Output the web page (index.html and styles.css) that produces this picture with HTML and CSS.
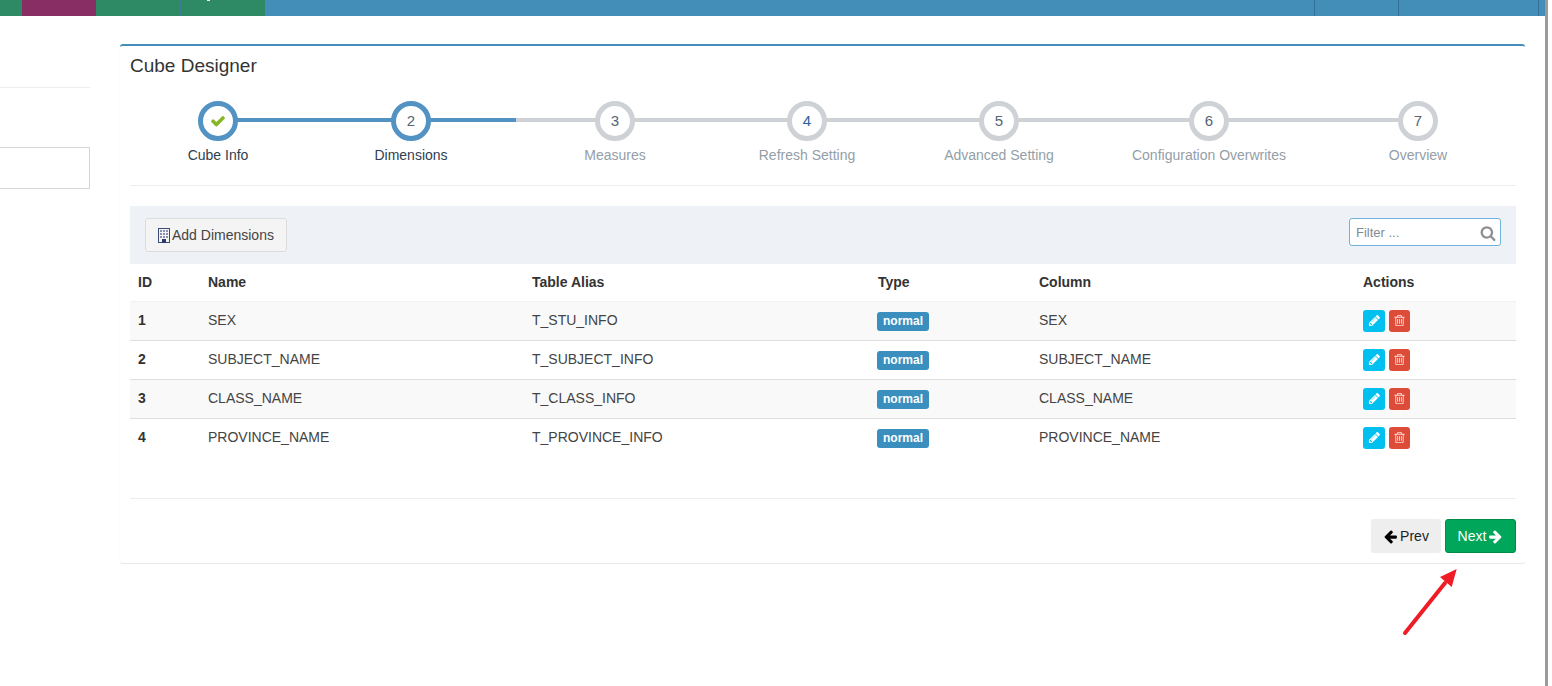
FILE: index.html
```html
<!DOCTYPE html>
<html lang="en">
<head>
<meta charset="utf-8">
<title>Cube Designer</title>
<link rel="stylesheet" href="styles.css">
</head>
<body>
<svg class="defs" width="0" height="0" aria-hidden="true">
  <symbol id="i-right" viewBox="0 0 1792 1792"><path d="M1600 960q0 54-37 91l-651 651q-39 37-91 37-51 0-90-37l-75-75q-38-38-38-91t38-91l293-293H245q-52 0-84.5-37.5T128 1024V896q0-53 32.5-90.5T245 768h704L656 474q-38-36-38-90t38-90l75-75q38-38 90-38 53 0 91 38l651 651q37 35 37 90z"/></symbol>
  <symbol id="i-pencil" viewBox="0 0 1792 1792"><path d="M491 1536l91-91-235-235-91 91v107h128v128h107zm523-928q0-22-22-22-10 0-17 7l-542 542q-7 7-7 17 0 22 22 22 10 0 17-7l542-542q7-7 7-17zm-54-192l416 416-832 832H128v-416zm683 96q0 53-37 90l-166 166-416-416 166-165q36-38 90-38 53 0 91 38l235 234q37 39 37 91z"/></symbol>
  <symbol id="i-trash" viewBox="0 0 1792 1792"><path d="M704 736v576q0 14-9 23t-23 9h-64q-14 0-23-9t-9-23V736q0-14 9-23t23-9h64q14 0 23 9t9 23zm256 0v576q0 14-9 23t-23 9h-64q-14 0-23-9t-9-23V736q0-14 9-23t23-9h64q14 0 23 9t9 23zm256 0v576q0 14-9 23t-23 9h-64q-14 0-23-9t-9-23V736q0-14 9-23t23-9h64q14 0 23 9t9 23zm128 724V512H448v948q0 22 7 40.5t14.5 27 10.5 8.5h832q3 0 10.5-8.5t14.5-27 7-40.5zM672 384h448l-48-117q-7-9-17-11H738q-10 2-17 11zm928 32v64q0 14-9 23t-23 9h-96v948q0 83-47 143.5t-113 60.5H480q-66 0-113-58.5T320 1464V512h-96q-14 0-23-9t-9-23v-64q0-14 9-23t23-9h309l70-167q15-37 54-63t79-26h320q40 0 79 26t54 63l70 167h309q14 0 23 9t9 23z"/></symbol>
</svg>

<div class="window">
  <header class="topbar">
    <span class="tab tab-green-a"></span>
    <span class="tab tab-purple"></span>
    <span class="tab tab-green-b"></span>
    <span class="tab tab-green-c"><span class="tab-mark"></span></span>
    <span class="topbar-fill"></span>
    <span class="tab tab-blue"></span>
    <span class="tab tab-blue tab-blue-last"></span>
  </header>

  <div class="workspace">
    <aside class="sidebar">
      <div class="side-rule"></div>
      <div class="side-input"></div>
    </aside>

    <main class="panel">
      <h2 class="panel-title">Cube Designer</h2>

      <ol class="steps">
        <li class="step step-first done"><span class="dot"><svg class="check" viewBox="0 0 1792 1792"><path d="M1671 566q0 40-28 68l-724 724-136 136q-28 28-68 28t-68-28l-136-136-362-362q-28-28-28-68t28-68l136-136q28-28 68-28t68 28l294 295 656-657q28-28 68-28t68 28l136 136q28 28 28 68z"/></svg></span><span class="step-label">Cube Info</span></li>
        <li class="step active"><span class="dot">2</span><span class="step-label">Dimensions</span></li>
        <li class="step"><span class="dot">3</span><span class="step-label">Measures</span></li>
        <li class="step step-link"><span class="dot">4</span><span class="step-label">Refresh Setting</span></li>
        <li class="step"><span class="dot">5</span><span class="step-label">Advanced Setting</span></li>
        <li class="step"><span class="dot">6</span><span class="step-label">Configuration Overwrites</span></li>
        <li class="step step-last"><span class="dot">7</span><span class="step-label">Overview</span></li>
      </ol>

      <div class="rule rule-steps"></div>

      <div class="toolbar">
        <button class="btn-add" type="button">
          <svg class="building" viewBox="0 0 12 15"><rect x="0.5" y="0.5" width="11" height="14" fill="#f4f4f4" stroke="#3d4a78"/><g fill="#8a92b0"><rect x="2" y="2" width="2" height="2"/><rect x="5" y="2" width="2" height="2"/><rect x="8" y="2" width="2" height="2"/><rect x="2" y="5" width="2" height="2"/><rect x="5" y="5" width="2" height="2"/><rect x="8" y="5" width="2" height="2"/><rect x="2" y="8" width="2" height="2"/><rect x="5" y="8" width="2" height="2"/><rect x="8" y="8" width="2" height="2"/></g><rect x="4" y="11" width="4" height="4" fill="#2b3a67"/></svg>Add Dimensions
        </button>
        <label class="filter">
          <input class="filter-input" type="text" placeholder="Filter ...">
          <svg class="search" viewBox="0 0 1792 1792"><path d="M1216 832q0-185-131.5-316.5T768 384 451.5 515.5 320 832t131.5 316.5T768 1280t316.5-131.5T1216 832zm512 832q0 52-38 90t-90 38q-54 0-90-38l-343-342q-179 124-399 124-143 0-273.5-55.5t-225-150-150-225T64 832t55.5-273.5 150-225 225-150T768 128t273.5 55.5 225 150 150 225T1472 832q0 220-124 399l343 343q37 37 37 90z"/></svg>
        </label>
      </div>

      <table class="dims">
        <colgroup>
          <col class="c-id"><col class="c-name"><col class="c-alias"><col class="c-type"><col class="c-column"><col class="c-actions">
        </colgroup>
        <thead>
          <tr><th>ID</th><th>Name</th><th>Table Alias</th><th>Type</th><th>Column</th><th>Actions</th></tr>
        </thead>
        <tbody>
          <tr><td class="id">1</td><td>SEX</td><td>T_STU_INFO</td><td><span class="badge">normal</span></td><td>SEX</td><td><span class="actions"><button class="act act-edit" type="button"><svg class="act-icon"><use href="#i-pencil"/></svg></button><button class="act act-del" type="button"><svg class="act-icon"><use href="#i-trash"/></svg></button></span></td></tr>
          <tr><td class="id">2</td><td>SUBJECT_NAME</td><td>T_SUBJECT_INFO</td><td><span class="badge">normal</span></td><td>SUBJECT_NAME</td><td><span class="actions"><button class="act act-edit" type="button"><svg class="act-icon"><use href="#i-pencil"/></svg></button><button class="act act-del" type="button"><svg class="act-icon"><use href="#i-trash"/></svg></button></span></td></tr>
          <tr><td class="id">3</td><td>CLASS_NAME</td><td>T_CLASS_INFO</td><td><span class="badge">normal</span></td><td>CLASS_NAME</td><td><span class="actions"><button class="act act-edit" type="button"><svg class="act-icon"><use href="#i-pencil"/></svg></button><button class="act act-del" type="button"><svg class="act-icon"><use href="#i-trash"/></svg></button></span></td></tr>
          <tr><td class="id">4</td><td>PROVINCE_NAME</td><td>T_PROVINCE_INFO</td><td><span class="badge">normal</span></td><td>PROVINCE_NAME</td><td><span class="actions"><button class="act act-edit" type="button"><svg class="act-icon"><use href="#i-pencil"/></svg></button><button class="act act-del" type="button"><svg class="act-icon"><use href="#i-trash"/></svg></button></span></td></tr>
        </tbody>
      </table>

      <div class="rule rule-foot"></div>

      <footer class="pager">
        <button class="btn btn-prev" type="button"><svg class="arrow arrow-left"><use href="#i-right"/></svg>Prev</button>
        <button class="btn btn-next" type="button">Next<svg class="arrow"><use href="#i-right"/></svg></button>
      </footer>
    </main>
  </div>

  <svg class="annotation" viewBox="0 0 70 80" aria-hidden="true">
    <line x1="7" y1="74" x2="47" y2="24" stroke="#ee1c25" stroke-width="4" stroke-linecap="round"/>
    <polygon points="58.7,10 42,18 53.7,28" fill="#ee1c25"/>
  </svg>
</div>
</body>
</html>
```
FILE: styles.css
```css
* { box-sizing: border-box; }

html, body {
  margin: 0;
  height: 100%;
  overflow: hidden;
  background: #fff;
}

body {
  font-family: "Liberation Sans", Arial, sans-serif;
  font-size: 14px;
  color: #333;
}

.defs { position: absolute; }

.window {
  position: relative;
  width: 1548px;
  height: 686px;
  border-right: 3px solid #9a9a9a;
}

/* top bar */
.topbar {
  display: flex;
  height: 16px;
  background: #438eb9;
}
.tab { display: block; height: 100%; position: relative; }
.tab-green-a { width: 22px; background: #2e8965; }
.tab-purple { width: 74px; background: #892e65; }
.tab-green-b { width: 85px; background: #2e8965; border-right: 1px solid #3f7f93; }
.tab-green-c { width: 84px; background: #2e8965; }
.tab-mark {
  position: absolute;
  left: 26px;
  top: 0;
  width: 3px;
  height: 1px;
  background: #f4efe0;
}
.topbar-fill { flex: 1; }
.tab-blue { width: 84px; border-left: 1px solid #2f6f98; }
.tab-blue-last { width: 141px; border-right: 1px solid #2f6f98; margin-right: 6px; }

/* layout */
.workspace {
  display: flex;
  gap: 30px;
  padding-top: 28px;
}

.sidebar {
  width: 90px;
  padding-top: 43px;
}
.side-rule { height: 1px; background: #eee; }
.side-input {
  height: 42px;
  margin-top: 59px;
  border: 1px solid #d5d5d5;
  border-left: 0;
}

.panel {
  width: 1405px;
  height: 519px;
  padding: 0 9px 0 10px;
  background: #fff;
  border-top: 2px solid #438eb9;
  border-radius: 3px;
  box-shadow: 0 1px 1px rgba(0, 0, 0, .1);
}

.panel-title {
  margin: 0;
  padding-top: 10px;
  font-size: 19px;
  font-weight: 400;
  line-height: 20px;
  color: #333;
}

/* steps */
.steps {
  display: grid;
  grid-template-columns: 176px 210px 198px 186px 198px 222px 196px;
  margin: 25px 0 0;
  padding: 0;
  list-style: none;
}
.step {
  position: relative;
  display: flex;
  flex-direction: column;
  align-items: center;
}
.step::before {
  content: "";
  position: absolute;
  top: 17px;
  left: 0;
  right: 0;
  height: 4px;
  background: #ced1d6;
}
.step-first::before { left: 50%; }
.step-last::before { right: 50%; }
.step.done::before, .step.active::before { background: #5293c4; }

.dot {
  position: relative;
  display: flex;
  align-items: center;
  justify-content: center;
  width: 40px;
  height: 40px;
  padding-bottom: 2px;
  border: 5px solid #ced1d6;
  border-radius: 50%;
  background: #fff;
  font-size: 15px;
  color: #546474;
}
.done .dot { padding-bottom: 0; }
.done .dot, .active .dot { border-color: #5293c4; }
.step-link .dot { color: #2b5f9e; }
.check { width: 16px; height: 16px; fill: #87b727; }

.step-label {
  margin-top: 6px;
  line-height: 16px;
  color: #949ea7;
}
.done .step-label, .active .step-label { color: #2f4050; }

.rule { height: 1px; background: #eeeeee; }
.rule-steps { margin-top: 22px; }

/* toolbar */
.toolbar {
  display: flex;
  justify-content: space-between;
  align-items: flex-start;
  height: 58px;
  margin-top: 20px;
  padding: 12px 15px;
  background: #eef1f6;
}
.btn-add {
  display: flex;
  align-items: center;
  height: 34px;
  width: 142px;
  padding: 0 0 0 12px;
  border: 1px solid #dcdcdc;
  border-radius: 3px;
  background: #f4f4f4;
  font: 14px "Liberation Sans", Arial, sans-serif;
  color: #444;
}
.building { width: 12px; height: 15px; margin-right: 2px; }

.filter {
  position: relative;
  display: block;
  width: 152px;
  height: 28px;
}
.filter-input {
  display: block;
  width: 100%;
  height: 100%;
  padding: 0 26px 0 6px;
  border: 1px solid #6fb3e0;
  border-radius: 3px;
  background: #fff;
  font: 13px "Liberation Sans", Arial, sans-serif;
  color: #555;
}
.filter-input::placeholder { color: #808a94; opacity: 1; }
.search {
  position: absolute;
  right: 5px;
  top: 7px;
  width: 16px;
  height: 16px;
  fill: #8d9092;
}

/* table */
.dims {
  width: 100%;
  table-layout: fixed;
  border-collapse: collapse;
}
.c-id { width: 70px; }
.c-name { width: 324px; }
.c-alias { width: 346px; }
.c-type { width: 161px; }
.c-column { width: 324px; }
.dims th {
  height: 37px;
  padding: 0 8px;
  text-align: left;
  font-weight: 700;
  color: #333;
  border-bottom: 1px solid #f2f2f2;
}
.dims td {
  height: 39px;
  padding: 0 8px 2px;
  border-bottom: 1px solid #ddd;
  color: #444;
}
.dims tbody tr:nth-child(odd) td { background: #f9f9f9; }
.dims tbody tr:last-child td { border-bottom: 0; background: #fff; }
.dims .id { font-weight: 700; color: #333; }

.badge {
  display: block;
  width: 52px;
  height: 19px;
  margin: 4px 0 0 -1px;
  line-height: 19px;
  text-align: center;
  border-radius: 3px;
  background: #3a8fbe;
  color: #fff;
  font-size: 12px;
  font-weight: 700;
}

.actions { display: flex; gap: 4px; margin-top: 2px; }
.act {
  display: flex;
  align-items: center;
  justify-content: center;
  width: 22px;
  height: 22px;
  padding: 0;
  border: 0;
  border-radius: 3px;
}
.act-edit { background: #00c0ef; }
.act-del { width: 21px; background: #dd4b39; }
.act-icon { width: 13px; height: 13px; fill: #fff; }
.act-del .act-icon { fill: #fbdcd8; }

.rule-foot { margin-top: 41px; }

/* pager */
.pager {
  display: flex;
  justify-content: flex-end;
  gap: 4px;
  padding-top: 20px;
}
.btn {
  display: flex;
  align-items: center;
  justify-content: center;
  height: 34px;
  padding: 0;
  border: 1px solid transparent;
  border-radius: 3px;
  font: 14px "Liberation Sans", Arial, sans-serif;
}
.btn-prev { width: 70px; background: #eeeeee; color: #222; }
.btn-next { width: 71px; background: #00a65a; border-color: #008d4c; color: #fff; }
.arrow { width: 15px; height: 15px; fill: currentColor; margin: 0 0 0 2px; }
.btn-prev .arrow { fill: #000; margin: 0 2px 0 0; }
.arrow-left { transform: scaleX(-1); }

/* hand-drawn annotation lying over the page */
.annotation {
  position: absolute;
  left: 1398px;
  top: 559px;
  width: 70px;
  height: 80px;
}
```
